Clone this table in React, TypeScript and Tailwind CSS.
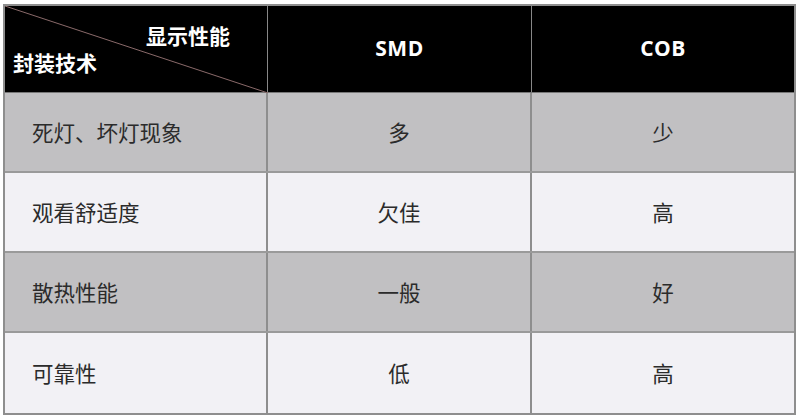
import React from "react";

const rows = [
  { k: "死灯、坏灯现象", a: "多", b: "少", gray: true },
  { k: "观看舒适度", a: "欠佳", b: "高", gray: false },
  { k: "散热性能", a: "一般", b: "好", gray: true },
  { k: "可靠性", a: "低", b: "高", gray: false },
];

const cjk = { fontFamily: '"Open Sans", "Noto Sans CJK SC", sans-serif' };

export default function App() {
  return (
    <div className="w-[800px] h-[417px] bg-white pt-[4px] pl-[3px]" style={cjk}>
      <div className="w-[793px] border-2 border-[#8e8e8e] flex flex-col">
        <div className="flex h-[87px] bg-black border-b border-[#777]">
          <div className="relative w-[263px] border-r border-[#888] text-white font-bold text-[21px]">
            <svg className="absolute inset-0" width="263" height="87" viewBox="0 0 263 87">
              <line x1="0" y1="0" x2="263" y2="87" stroke="#8a6a6a" strokeWidth="1" />
            </svg>
            <span className="absolute left-[141px] top-[20px] leading-none">显示性能</span>
            <span className="absolute left-[8px] top-[47px] leading-none">封装技术</span>
          </div>
          <div className="w-[264px] border-r border-[#888] flex items-center justify-center text-white font-bold text-[21px] tracking-[0.5px]">
            SMD
          </div>
          <div className="flex-1 flex items-center justify-center text-white font-bold text-[21px] tracking-[0.5px]">
            COB
          </div>
        </div>
        {rows.map((r, i) => (
          <div
            key={i}
            className={`flex h-[80px] text-[21.5px] text-[#2b2b2b] ${r.gray ? "bg-[#c1c0c2]" : "bg-[#f2f1f5]"} ${i < rows.length - 1 ? "border-b-2 border-[#9a9a9a]" : ""}`}
          >
            <div className="w-[263px] border-r-2 border-[#8e8e8e] flex items-center pl-[27px] pt-[3px]">{r.k}</div>
            <div className="w-[264px] border-r-2 border-[#8e8e8e] flex items-center justify-center pt-[3px]">{r.a}</div>
            <div className="flex-1 flex items-center justify-center pt-[3px]">{r.b}</div>
          </div>
        ))}
      </div>
    </div>
  );
}
